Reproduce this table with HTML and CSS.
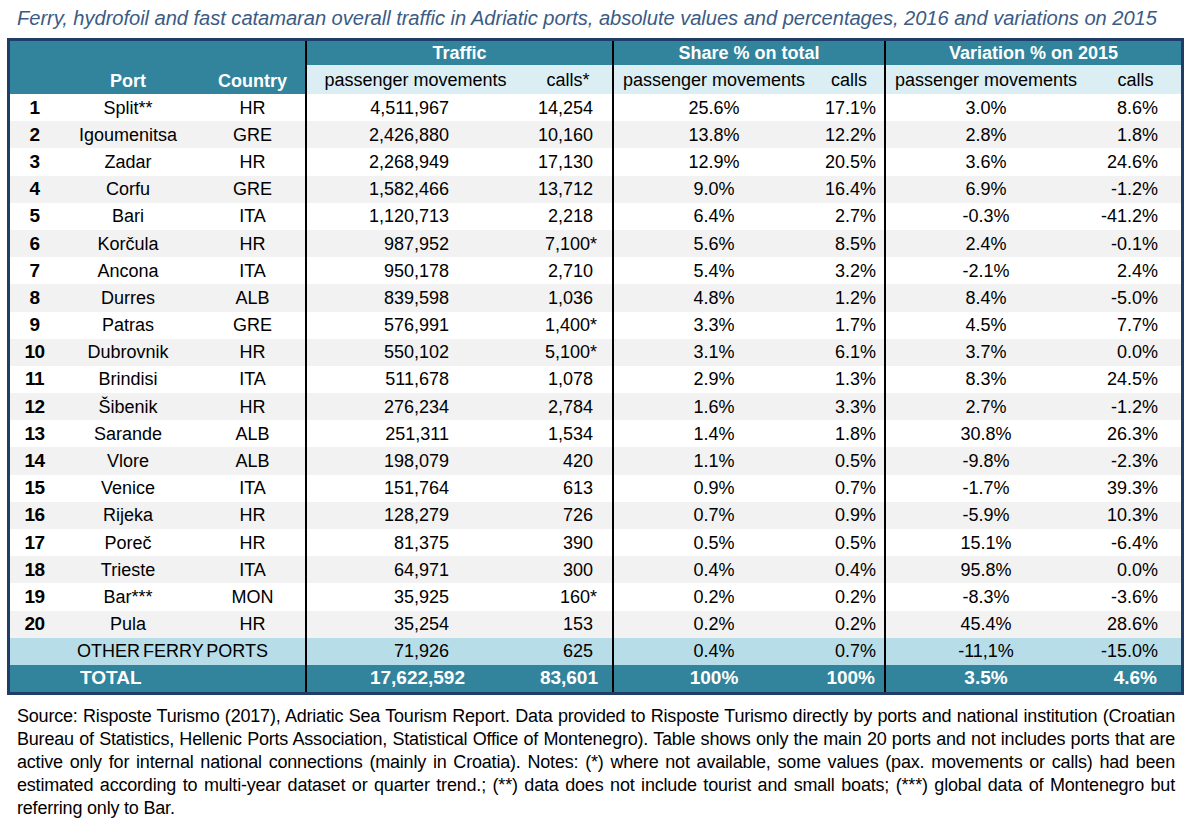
FILE: index.html
```html
<!DOCTYPE html>
<html lang="en">
<head>
<meta charset="utf-8">
<title>Ferry traffic in Adriatic ports</title>
<link rel="stylesheet" href="styles.css">
</head>
<body>
<h1 class="title">Ferry, hydrofoil and fast catamaran overall traffic in Adriatic ports, absolute values and percentages, 2016 and variations on 2015</h1>
<table class="traffic">
  <colgroup>
    <col class="c-num"><col class="c-port"><col class="c-country">
    <col class="c-tpm"><col class="c-tcalls">
    <col class="c-spm"><col class="c-scalls">
    <col class="c-vpm"><col class="c-vcalls">
  </colgroup>
  <thead>
    <tr class="h1">
      <th colspan="3"></th>
      <th colspan="2" class="sep">Traffic</th>
      <th colspan="2" class="sep">Share % on total</th>
      <th colspan="2" class="sep">Variation % on 2015</th>
    </tr>
    <tr class="h2">
      <th class="dark"></th>
      <th class="dark">Port</th>
      <th class="dark">Country</th>
      <th class="sub sep">passenger movements</th>
      <th class="sub">calls*</th>
      <th class="sub sep">passenger movements</th>
      <th class="sub">calls</th>
      <th class="sub sep">passenger movements</th>
      <th class="sub">calls</th>
    </tr>
  </thead>
  <tbody>
    <tr><td class="n">1</td><td>Split**</td><td>HR</td><td class="tpm sep">4,511,967</td><td class="tc">14,254</td><td class="sep">25.6%</td><td class="sc">17.1%</td><td class="sep">3.0%</td><td class="vc">8.6%</td></tr>
    <tr><td class="n">2</td><td>Igoumenitsa</td><td>GRE</td><td class="tpm sep">2,426,880</td><td class="tc">10,160</td><td class="sep">13.8%</td><td class="sc">12.2%</td><td class="sep">2.8%</td><td class="vc">1.8%</td></tr>
    <tr><td class="n">3</td><td>Zadar</td><td>HR</td><td class="tpm sep">2,268,949</td><td class="tc">17,130</td><td class="sep">12.9%</td><td class="sc">20.5%</td><td class="sep">3.6%</td><td class="vc">24.6%</td></tr>
    <tr><td class="n">4</td><td>Corfu</td><td>GRE</td><td class="tpm sep">1,582,466</td><td class="tc">13,712</td><td class="sep">9.0%</td><td class="sc">16.4%</td><td class="sep">6.9%</td><td class="vc">-1.2%</td></tr>
    <tr><td class="n">5</td><td>Bari</td><td>ITA</td><td class="tpm sep">1,120,713</td><td class="tc">2,218</td><td class="sep">6.4%</td><td class="sc">2.7%</td><td class="sep">-0.3%</td><td class="vc">-41.2%</td></tr>
    <tr><td class="n">6</td><td>Korčula</td><td>HR</td><td class="tpm sep">987,952</td><td class="tc st">7,100*</td><td class="sep">5.6%</td><td class="sc">8.5%</td><td class="sep">2.4%</td><td class="vc">-0.1%</td></tr>
    <tr><td class="n">7</td><td>Ancona</td><td>ITA</td><td class="tpm sep">950,178</td><td class="tc">2,710</td><td class="sep">5.4%</td><td class="sc">3.2%</td><td class="sep">-2.1%</td><td class="vc">2.4%</td></tr>
    <tr><td class="n">8</td><td>Durres</td><td>ALB</td><td class="tpm sep">839,598</td><td class="tc">1,036</td><td class="sep">4.8%</td><td class="sc">1.2%</td><td class="sep">8.4%</td><td class="vc">-5.0%</td></tr>
    <tr><td class="n">9</td><td>Patras</td><td>GRE</td><td class="tpm sep">576,991</td><td class="tc st">1,400*</td><td class="sep">3.3%</td><td class="sc">1.7%</td><td class="sep">4.5%</td><td class="vc">7.7%</td></tr>
    <tr><td class="n">10</td><td>Dubrovnik</td><td>HR</td><td class="tpm sep">550,102</td><td class="tc st">5,100*</td><td class="sep">3.1%</td><td class="sc">6.1%</td><td class="sep">3.7%</td><td class="vc">0.0%</td></tr>
    <tr><td class="n">11</td><td>Brindisi</td><td>ITA</td><td class="tpm sep">511,678</td><td class="tc">1,078</td><td class="sep">2.9%</td><td class="sc">1.3%</td><td class="sep">8.3%</td><td class="vc">24.5%</td></tr>
    <tr><td class="n">12</td><td>Šibenik</td><td>HR</td><td class="tpm sep">276,234</td><td class="tc">2,784</td><td class="sep">1.6%</td><td class="sc">3.3%</td><td class="sep">2.7%</td><td class="vc">-1.2%</td></tr>
    <tr><td class="n">13</td><td>Sarande</td><td>ALB</td><td class="tpm sep">251,311</td><td class="tc">1,534</td><td class="sep">1.4%</td><td class="sc">1.8%</td><td class="sep">30.8%</td><td class="vc">26.3%</td></tr>
    <tr><td class="n">14</td><td>Vlore</td><td>ALB</td><td class="tpm sep">198,079</td><td class="tc">420</td><td class="sep">1.1%</td><td class="sc">0.5%</td><td class="sep">-9.8%</td><td class="vc">-2.3%</td></tr>
    <tr><td class="n">15</td><td>Venice</td><td>ITA</td><td class="tpm sep">151,764</td><td class="tc">613</td><td class="sep">0.9%</td><td class="sc">0.7%</td><td class="sep">-1.7%</td><td class="vc">39.3%</td></tr>
    <tr><td class="n">16</td><td>Rijeka</td><td>HR</td><td class="tpm sep">128,279</td><td class="tc">726</td><td class="sep">0.7%</td><td class="sc">0.9%</td><td class="sep">-5.9%</td><td class="vc">10.3%</td></tr>
    <tr><td class="n">17</td><td>Poreč</td><td>HR</td><td class="tpm sep">81,375</td><td class="tc">390</td><td class="sep">0.5%</td><td class="sc">0.5%</td><td class="sep">15.1%</td><td class="vc">-6.4%</td></tr>
    <tr><td class="n">18</td><td>Trieste</td><td>ITA</td><td class="tpm sep">64,971</td><td class="tc">300</td><td class="sep">0.4%</td><td class="sc">0.4%</td><td class="sep">95.8%</td><td class="vc">0.0%</td></tr>
    <tr><td class="n">19</td><td>Bar***</td><td>MON</td><td class="tpm sep">35,925</td><td class="tc st">160*</td><td class="sep">0.2%</td><td class="sc">0.2%</td><td class="sep">-8.3%</td><td class="vc">-3.6%</td></tr>
    <tr><td class="n">20</td><td>Pula</td><td>HR</td><td class="tpm sep">35,254</td><td class="tc">153</td><td class="sep">0.2%</td><td class="sc">0.2%</td><td class="sep">45.4%</td><td class="vc">28.6%</td></tr>
    <tr class="other"><td colspan="3" class="label">OTHER FERRY PORTS</td><td class="tpm sep">71,926</td><td class="tc">625</td><td class="sep">0.4%</td><td class="sc">0.7%</td><td class="sep">-11,1%</td><td class="vc">-15.0%</td></tr>
  </tbody>
  <tfoot>
    <tr class="total"><td colspan="3" class="label">TOTAL</td><td class="tpm sep">17,622,592</td><td class="tc">83,601</td><td class="sep">100%</td><td class="sc">100%</td><td class="sep">3.5%</td><td class="vc">4.6%</td></tr>
  </tfoot>
</table>
<p class="source">
  <span class="line">Source: Risposte Turismo (2017), Adriatic Sea Tourism Report. Data provided to Risposte Turismo directly by ports and national institution (Croatian</span>
  <span class="line">Bureau of Statistics, Hellenic Ports Association, Statistical Office of Montenegro). Table shows only the main 20 ports and not includes ports that are</span>
  <span class="line">active only for internal national connections (mainly in Croatia). Notes: (*) where not available, some values (pax. movements or calls) had been</span>
  <span class="line">estimated according to multi-year dataset or quarter trend.; (**) data does not include tourist and small boats; (***) global data of Montenegro but</span>
  <span class="line last">referring only to Bar.</span>
</p>
</body>
</html>
```

FILE: styles.css
```css
body {
  margin: 0;
  background: #ffffff;
  color: #000000;
  font-family: "Liberation Sans", Arial, sans-serif;
}

.title {
  margin: 0;
  padding: 6px 0 8px 17px;
  font-size: 20.15px;
  line-height: 24px;
  font-weight: normal;
  font-style: italic;
  color: #3b5b85;
  white-space: nowrap;
  letter-spacing: -0.05px;
}

.traffic {
  margin-left: 7px;
  width: 1177px;
  table-layout: fixed;
  border-collapse: separate;
  border-spacing: 0;
  border: 3px solid #1f3d66;
  font-size: 18px;
}

.c-num { width: 46px; }
.c-port { width: 144px; }
.c-country { width: 105px; }
.c-tpm { width: 219px; }
.c-tcalls { width: 88px; }
.c-spm { width: 202px; }
.c-scalls { width: 70px; }
.c-vpm { width: 202px; }
.c-vcalls { width: 95px; }

.traffic th,
.traffic td {
  padding: 0;
  text-align: center;
  white-space: nowrap;
  line-height: 20px;
}

.traffic .sep {
  border-left: 2px solid #000000;
}

.h1 th {
  height: 24px;
  background: #31849b;
  color: #ffffff;
  font-weight: bold;
  vertical-align: middle;
}

.h2 th {
  height: 26px;
  font-weight: normal;
  vertical-align: middle;
}

.h2 .dark {
  background: #31849b;
  color: #ffffff;
  font-weight: bold;
  vertical-align: bottom;
  padding-bottom: 3px;
}

.h2 .sub {
  background: #daeef3;
}

.h2 .sub:last-child {
  padding-left: 4px;
}

tbody td {
  height: 27.2px;
  vertical-align: middle;
  padding-bottom: 2px;
}

tbody tr:nth-child(even) td {
  background: #f2f2f2;
}

tbody tr:nth-child(odd) td {
  background: #ffffff;
}

.traffic td.n {
  font-weight: bold;
  font-size: 19px;
  letter-spacing: -0.5px;
  padding-left: 3px;
}

.traffic td.tpm { text-align: right; padding-right: 75px; }
.traffic td.tc { text-align: right; padding-right: 19px; }
.traffic td.tc.st { padding-right: 15px; }
.traffic td.sc { text-align: right; padding-right: 8px; }
.traffic td.vc { text-align: right; padding-right: 23px; }

.traffic tr.other td {
  background: #b7dde8;
  height: 27px;
}

.traffic tr.other td.label {
  text-align: left;
  padding-left: 67px;
  word-spacing: -2px;
}

.traffic tr.total td {
  background: #31849b;
  color: #ffffff;
  font-weight: bold;
  font-size: 19px;
  height: 27px;
}

.traffic tr.total td.label {
  text-align: left;
  padding-left: 70px;
}

.traffic tr.total td.tpm { padding-right: 59px; }
.traffic tr.total td.tc { padding-right: 14px; }
.traffic tr.total td.sc { padding-right: 9px; }
.traffic tr.total td.vc { padding-right: 24px; }

.source {
  margin: 10px 16px 0 17px;
  font-size: 18px;
  line-height: 23px;
  letter-spacing: -0.2px;
}

.source .line {
  display: block;
  text-align: justify;
  text-align-last: justify;
  white-space: nowrap;
}

.source .line.last {
  text-align-last: left;
}
```
